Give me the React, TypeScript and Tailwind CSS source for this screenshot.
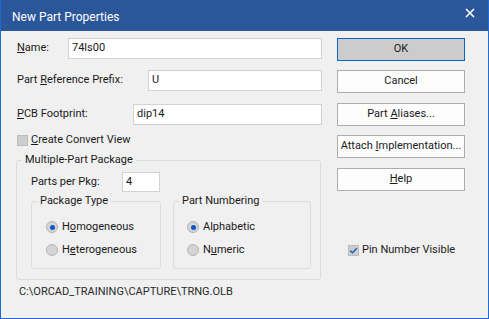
const font = "font-['Roboto','Liberation_Sans',sans-serif]";

function TextBox({ value, width }: { value: string; width: string }) {
  return (
    <div
      className={`${width} h-[21px] ml-auto bg-white border border-[#d2d2d2] flex items-center pl-[3px] text-[#1a1a1a]`}
    >
      {value}
    </div>
  );
}

function DialogButton({ children, primary }: { children: React.ReactNode; primary?: boolean }) {
  return (
    <button
      className={`w-[128px] h-[23px] flex items-center justify-center text-[#1a1a1a] border ${
        primary ? 'bg-[#cccccc] border-[#0a64c8]' : 'bg-[#fdfdfd] border-[#adadad]'
      }`}
    >
      <span>{children}</span>
    </button>
  );
}

function Radio({ checked, children }: { checked?: boolean; children: React.ReactNode }) {
  return (
    <div className="flex items-center h-[16px]">
      <span className="w-[12px] h-[12px] rounded-full bg-[#d4d4d4] border border-[#b5b5b5] flex items-center justify-center">
        {checked && <span className="w-[5px] h-[5px] rounded-full bg-[#0a5ac4]" />}
      </span>
      <span className="ml-[4px]">{children}</span>
    </div>
  );
}

function Check({ checked, children }: { checked?: boolean; children: React.ReactNode }) {
  return (
    <div className="flex items-center h-[16px]">
      <span className="w-[11px] h-[11px] bg-[#cdcdcd] border border-[#bdbdbd] flex items-center justify-center">
        {checked && (
          <svg width="9" height="9" viewBox="0 0 9 9">
            <path d="M1.2 4.6 L3.5 6.8 L7.8 2.2" fill="none" stroke="#1c5fc4" strokeWidth="1.5" />
          </svg>
        )}
      </span>
      <span className="ml-[3px]">{children}</span>
    </div>
  );
}

export default function App() {
  return (
    <div
      className={`${font} text-[11px] text-[#1a1a1a] w-[489px] h-[319px] bg-[#f0f0f0] border-x border-b border-[#1f6bd3] flex flex-col`}
    >
      {/* Title bar */}
      <div className="h-[31px] bg-[#2b579a] flex items-center justify-between pl-[11px] pr-[13px] text-white text-[12px] shrink-0">
        <span className="pt-[2px]">New Part Properties</span>
        <svg width="10" height="10" viewBox="0 0 10 10" className="mb-[5px]">
          <path d="M1 1 L9 9 M9 1 L1 9" stroke="white" strokeWidth="1.6" />
        </svg>
      </div>

      <div className="flex pt-[7px]">
        {/* Left column */}
        <div className="w-[321px] pl-[16px] flex flex-col">
          <div className="flex items-center">
            <span>
              <u>N</u>ame:
            </span>
            <TextBox value="74ls00" width="w-[254px]" />
          </div>
          <div className="flex items-center mt-[11px]">
            <span>
              Part <u>R</u>eference Prefix:
            </span>
            <TextBox value="U" width="w-[174px]" />
          </div>
          <div className="flex items-center mt-[13px]">
            <span>
              <u>P</u>CB Footprint:
            </span>
            <TextBox value="dip14" width="w-[189px]" />
          </div>

          <div className="mt-[7px]">
            <Check>
              <u>C</u>reate Convert View
            </Check>
          </div>

          <fieldset className="mt-[4px] ml-[-1px] w-[305px] h-[128px] border border-[#dcdcdc] rounded-[3px] pl-[14px]">
            <legend className="ml-[-9px] px-[3px] leading-[16px]">Multiple-Part Package</legend>
            <div className="flex items-center pt-[4px]">
              <span className="w-[91px]">
                Parts per Pk<u>g</u>:
              </span>
              <div className="w-[38px] h-[20px] bg-white border border-[#d2d2d2] flex items-center pl-[3px]">4</div>
            </div>
            <div className="flex mt-[1px]">
              <fieldset className="w-[130px] h-[76px] border border-[#dcdcdc] rounded-[3px] pl-[14px]">
                <legend className="ml-[-9px] px-[3px] leading-[16px]">Package Type</legend>
                <div className="pt-[10px] flex flex-col gap-[7px]">
                  <Radio checked>
                    H<u>o</u>mogeneous
                  </Radio>
                  <Radio>
                    H<u>e</u>terogeneous
                  </Radio>
                </div>
              </fieldset>
              <fieldset className="ml-[12px] w-[138px] h-[76px] border border-[#dcdcdc] rounded-[3px] pl-[13px]">
                <legend className="ml-[-8px] px-[3px] leading-[16px]">Part Numbering</legend>
                <div className="pt-[10px] flex flex-col gap-[7px]">
                  <Radio checked>Alphabetic</Radio>
                  <Radio>
                    N<u>u</u>meric
                  </Radio>
                </div>
              </fieldset>
            </div>
          </fieldset>

          <div className="mt-[4px] ml-[2px] h-[16px] flex items-center text-[#2a2a2a]">
            C:\ORCAD_TRAINING\CAPTURE\TRNG.OLB
          </div>
        </div>

        {/* Right column */}
        <div className="ml-[15px] w-[128px] flex flex-col">
          <DialogButton primary>OK</DialogButton>
          <div className="mt-[9px]">
            <DialogButton>Cancel</DialogButton>
          </div>
          <div className="mt-[10px]">
            <DialogButton>
              Part <u>A</u>liases...
            </DialogButton>
          </div>
          <div className="mt-[9px]">
            <DialogButton>
              Attach <u>I</u>mplementation...
            </DialogButton>
          </div>
          <div className="mt-[10px]">
            <DialogButton>
              <u>H</u>elp
            </DialogButton>
          </div>
          <div className="mt-[51px] pl-[11px]">
            <Check checked>Pin Number Visible</Check>
          </div>
        </div>
      </div>
    </div>
  );
}
